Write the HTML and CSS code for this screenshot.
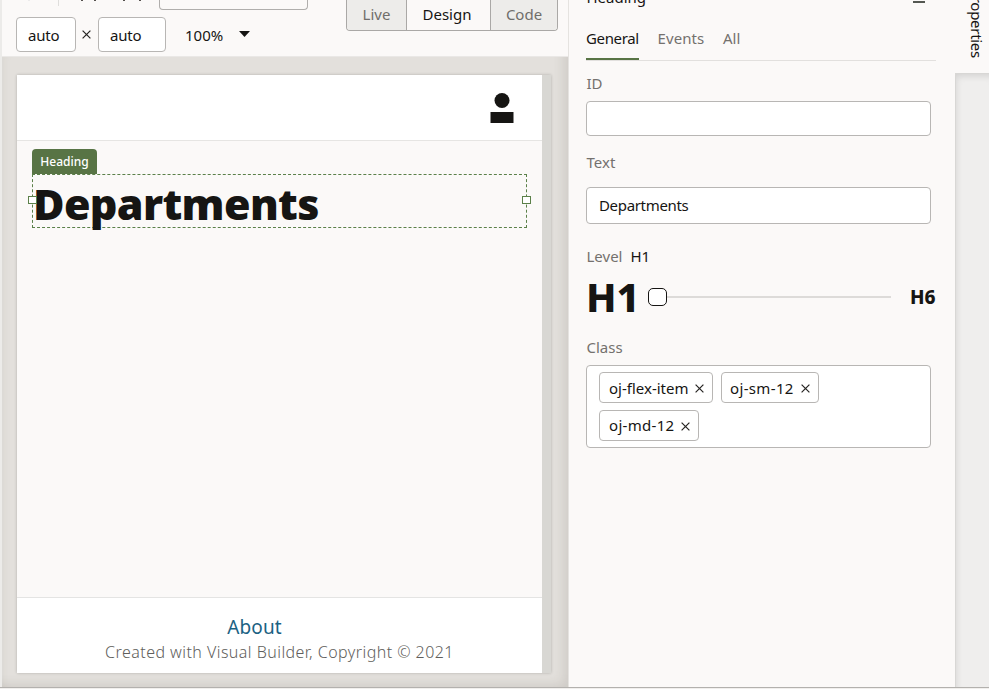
FILE: index.html
```html
<!DOCTYPE html>
<html lang="en">
<head>
<meta charset="utf-8">
<title>Visual Builder</title>
<link rel="stylesheet" href="styles.css">
</head>
<body>
<div class="app">
  <section class="designer">
    <div class="toolbar">
      <div class="tools">
        <div class="tools-top">
          <svg class="tool-marks" width="143" height="10" viewBox="0 0 143 10"><path d="M12 0h2" stroke="#ddd"/><path d="M42.5 0v6" stroke="#dfdedc"/><path d="M65 .5h2M78 .5h2M107 .5h2M123 .5h2" stroke="#55514e"/></svg>
          <div class="top-field"></div>
        </div>
        <div class="tools-size">
          <div class="size-field">auto</div>
          <svg class="times" width="9" height="9" viewBox="0 0 9 9"><path d="M.6.6l7.8 7.8M8.4.6L.6 8.4"/></svg>
          <div class="size-field wide">auto</div>
          <span class="zoom">100%</span>
          <svg class="caret" width="11" height="6" viewBox="0 0 11 6"><path d="M0 0h11L5.500 6z"/></svg>
        </div>
      </div>
      <div class="modes"><span class="mode live">Live</span><span class="mode design">Design</span><span class="mode code">Code</span></div>
    </div>
    <div class="stage">
      <div class="device">
        <div class="page">
          <header class="page-header"><svg width="24" height="30" viewBox="0 0 24 30"><circle cx="12" cy="7.500" r="7.500"/><path d="M.5 19h23v11H.5z"/></svg></header>
          <main class="page-main">
            <div class="tag">Heading</div>
            <div class="selection"><h1>Departments</h1><i class="handle left"></i><i class="handle right"></i></div>
          </main>
          <footer class="page-footer"><a class="about">About</a><p>Created with Visual Builder, Copyright © 2021</p></footer>
        </div>
      </div>
    </div>
  </section>
  <aside class="panel">
    <div class="panel-title"><span>Heading</span><i class="menu-line"></i></div>
    <nav class="tabs"><span class="tab active">General</span><span class="tab events">Events</span><span class="tab all">All</span></nav>
    <div class="label id-label">ID</div>
    <div class="field id-field"></div>
    <div class="label text-label">Text</div>
    <div class="field text-field"><span>Departments</span></div>
    <div class="label level-label">Level <b>H1</b></div>
    <div class="slider"><strong class="h-one">H1</strong><i class="thumb"></i><i class="track"></i><strong class="h-six">H6</strong></div>
    <div class="label class-label">Class</div>
    <div class="chips">
      <div class="chip flex-item"><span>oj-flex-item</span><svg width="9" height="9" viewBox="0 0 9 9"><path d="M.6.6l7.8 7.8M8.4.6L.6 8.4"/></svg></div>
      <div class="chip sm"><span>oj-sm-12</span><svg width="9" height="9" viewBox="0 0 9 9"><path d="M.6.6l7.8 7.8M8.4.6L.6 8.4"/></svg></div>
      <div class="chip md"><span>oj-md-12</span><svg width="9" height="9" viewBox="0 0 9 9"><path d="M.6.6l7.8 7.8M8.4.6L.6 8.4"/></svg></div>
    </div>
  </aside>
  <div class="rail"><div class="rail-tab"><span>Properties</span></div><div class="rail-body"></div></div>
</div>
</body>
</html>
```

FILE: styles.css
```css
* { box-sizing: border-box; }
body { margin: 0; width: 989px; height: 689px; overflow: hidden; background: #f1efed; font: 15px/20px "Noto Sans", "Open Sans", sans-serif; color: #161513; }
.app { display: grid; grid-template-columns: 569px 386px 34px; height: 688px; border-bottom: 1px solid #b3b1ae; background: #fbf9f8; }
svg { display: block; flex: none; }
i { display: block; }
.designer { display: flex; flex-direction: column; min-width: 0; min-height: 0; border-left: 2px solid #ecebe9; border-right: 1px solid #e5e3e0; }
.toolbar { display: flex; height: 57px; padding-left: 14px; border-bottom: 1px solid #eae8e6; }
.tools { width: 330px; }
.tools-top { display: flex; height: 10px; }
.top-field { width: 149px; height: 10px; border: 1px solid #b0aeac; border-top: 0; border-radius: 0 0 4px 4px; }
.tools-size { display: flex; align-items: center; margin-top: 7px; height: 35px; }
.size-field { width: 60px; height: 35px; padding: 7px 0 0 11px; border: 1px solid #b8b6b4; border-radius: 4px; background: #fff; letter-spacing: -.2px; }
.times { margin: 0 7px 0 6px; }
.times path, .chip path { stroke: #262422; stroke-width: 1.2; fill: none; }
.size-field.wide { width: 68px; }
.zoom { width: 54px; margin-left: 19px; }
.caret { fill: #161513; margin-top: -1px; }
.modes { display: flex; height: 31px; width: 212px; border: 1px solid #aaa8a6; border-top: 0; border-radius: 0 0 4px 4px; overflow: hidden; }
.mode { padding-top: 4px; text-align: center; color: #706e6b; background: #edecea; }
.live { width: 59px; }
.design { width: 85px; padding-right: 3px; border: solid #aaa8a6; border-width: 0 1px; background: #fbf9f8; color: #161513; font-weight: 450; }
.code { width: 66px; }
.stage { flex: 1; padding: 18px 0 0 15px; background: #e3e0dc; box-shadow: inset -12px -10px 12px -8px rgba(60, 50, 40, .12), inset 8px 0 8px -6px rgba(60, 50, 40, .05); }
.device { width: 534px; height: 598px; padding-right: 9px; background: #d8d7d3; box-shadow: 0 0 3px rgba(0, 0, 0, .22); }
.page { display: grid; grid-template-rows: 66px 456px 76px; height: 598px; background: #fbf9f8; }
.page-header { display: flex; justify-content: flex-end; padding: 18px 28px 0 0; background: #fff; border-bottom: 1px solid #e6e5e3; fill: #161513; }
.page-main { padding: 8px 15px 0; }
.tag { width: 65px; height: 25px; border-radius: 4px 4px 0 0; background: #587445; color: #fff; font-size: 12px; line-height: 25px; text-align: center; font-weight: 500; }
.selection { position: relative; height: 54px; border: 1px dashed #5b8049; }
h1 { margin: 0; font-size: 43px; line-height: 57px; font-weight: 900; letter-spacing: -.65px; white-space: nowrap; }
.handle { position: absolute; top: 21px; width: 9px; height: 8px; border: 1px solid #5b8049; background: #fff; }
.left { left: -5px; }
.right { right: -5px; }
.page-footer { padding-top: 16px; border-top: 1px solid #e4e4e3; background: #fff; text-align: center; }
.about { display: block; color: #1b6283; font-size: 19px; line-height: 26px; padding-right: 50px; letter-spacing: .1px; }
.page-footer p { margin: 0; font-size: 16px; line-height: 24px; font-weight: 300; color: #605e5b; letter-spacing: .45px; }
.panel { padding-left: 17.500px; min-width: 0; }
.panel-title { display: flex; justify-content: space-between; height: 14px; padding-right: 30px; }
.panel-title span { margin-top: -13px; }
.menu-line { width: 12px; height: 2px; margin-top: 1px; background: #545852; }
.tabs { display: flex; height: 47px; width: 350px; padding-top: 14px; margin-left: -.5px; border-bottom: 1px solid #e2e0de; color: #74716e; }
.tab { height: 32px; margin-right: 18.500px; letter-spacing: .1px; }
.active { width: 53px; border-bottom: 2px solid #587445; color: #161513; letter-spacing: -.35px; }
.label { position: relative; top: -1px; color: #74716e; height: 20px; }
.id-label { margin-top: 13px; }
.field { width: 345px; margin-left: -.5px; border: 1px solid #b8b6b4; border-radius: 4px; background: #fff; }
.id-field { height: 35px; margin-top: 7px; }
.text-label { margin-top: 17px; }
.text-field { height: 37px; margin-top: 14px; padding: 7px 12px; letter-spacing: -.33px; }
.level-label { margin-top: 23px; }
.label b { margin-left: 4px; font-weight: 400; color: #161513; }
.slider { display: flex; align-items: center; height: 60px; margin-left: -.5px; width: 352px; }
.h-one { width: 62px; font-size: 40px; line-height: 60px; font-weight: 800; }
.thumb { width: 19px; height: 18px; border: 1px solid #161513; border-radius: 5px; background: #fff; }
.track { width: 224px; height: 2px; background: #dddbd9; }
.h-six { margin-left: 19px; font-size: 19px; font-weight: 800; }
.class-label { margin-top: 11px; }
.chips { display: flex; flex-wrap: wrap; align-content: flex-start; gap: 7px 8px; width: 345px; height: 83px; margin: 7px 0 0 -.5px; padding: 6px 12px; border: 1px solid #b8b6b4; border-radius: 4px; background: #fff; }
.chip { display: flex; align-items: center; justify-content: space-between; height: 31px; padding: 0 8px 0 9px; border: 1px solid #b8b6b4; border-radius: 4px; white-space: nowrap; }
.chip svg { margin-top: 1px; }
.flex-item { width: 114px; }
.sm { width: 98px; padding-left: 8px; letter-spacing: .35px; }
.md { width: 100px; letter-spacing: .3px; }
.md span { margin-top: -1px; }
.rail { display: flex; flex-direction: column; min-height: 0; }
.rail-tab { position: relative; height: 73px; }
.rail-tab span { position: absolute; bottom: 15px; left: 12px; writing-mode: vertical-rl; letter-spacing: -.3px; }
.rail-body { flex: 1; border: solid #d8d7d5; border-width: 1px 0 0 1px; background: #efeeed; box-shadow: inset 3px 5px 7px -3px rgba(0, 0, 0, .12); }
```
